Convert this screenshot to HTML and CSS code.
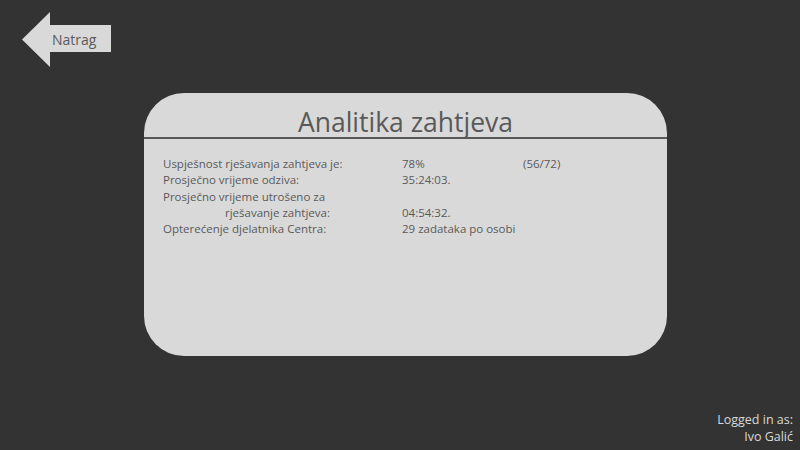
FILE: index.html
```html
<!DOCTYPE html>
<html lang="hr">
<head>
<meta charset="utf-8">
<title>Analitika zahtjeva</title>
<link rel="stylesheet" href="styles.css">
</head>
<body>
<div class="page">
  <header class="top">
    <a class="back" href="#"><span class="back-label">Natrag</span></a>
  </header>
  <main class="panel">
    <h1 class="panel-title">Analitika zahtjeva</h1>
    <div class="stats">
      <div class="label">Uspješnost rješavanja zahtjeva je:</div>
      <div class="value">78%</div>
      <div class="extra">(56/72)</div>

      <div class="label">Prosječno vrijeme odziva:</div>
      <div class="value">35:24:03.</div>
      <div class="extra"></div>

      <div class="label">Prosječno vrijeme utrošeno za</div>
      <div class="value"></div>
      <div class="extra"></div>

      <div class="label indent">rješavanje zahtjeva:</div>
      <div class="value">04:54:32.</div>
      <div class="extra"></div>

      <div class="label">Opterećenje djelatnika Centra:</div>
      <div class="value">29 zadataka po osobi</div>
      <div class="extra"></div>
    </div>
  </main>
  <footer class="login">
    <div>Logged in as:</div>
    <div>Ivo Galić</div>
  </footer>
</div>
</body>
</html>
```

FILE: styles.css
```css
html, body {
  margin: 0;
  padding: 0;
}
body {
  background: #333333;
  font-family: "Open Sans", "Noto Sans", sans-serif;
  width: 800px;
  height: 450px;
  overflow: hidden;
}
.page {
  display: flex;
  flex-direction: column;
  height: 450px;
}
.top {
  padding: 12px 0 0 22px;
  height: 55px;
}
.back {
  display: flex;
  align-items: center;
  width: 89px;
  height: 55px;
  background: #d9d9d9;
  clip-path: polygon(0 50%, 28px 0, 28px 13px, 100% 13px, 100% 40px, 28px 40px, 28px 100%);
  text-decoration: none;
  color: #595959;
}
.back-label {
  padding-left: 30px;
  font-size: 14px;
}
.panel {
  margin: 26px 0 0 144px;
  width: 523px;
  height: 263px;
  background: #d9d9d9;
  border-radius: 40px;
  box-sizing: border-box;
}
.panel-title {
  margin: 0;
  height: 46px;
  box-sizing: border-box;
  padding-top: 14px;
  border-bottom: 2px solid #595959;
  text-align: center;
  font-weight: 400;
  font-size: 26.5px;
  line-height: 30px;
  color: #595959;
}
.stats {
  display: grid;
  grid-template-columns: 239px 121px auto;
  padding: 17px 0 0 19px;
  font-size: 11.5px;
  line-height: 16.3px;
  color: #595959;
}
.indent {
  padding-left: 62px;
}
.login {
  margin-top: auto;
  padding: 0 7px 5px 0;
  text-align: right;
  color: #d9d9d9;
  font-size: 12.5px;
  line-height: 17px;
}
```
